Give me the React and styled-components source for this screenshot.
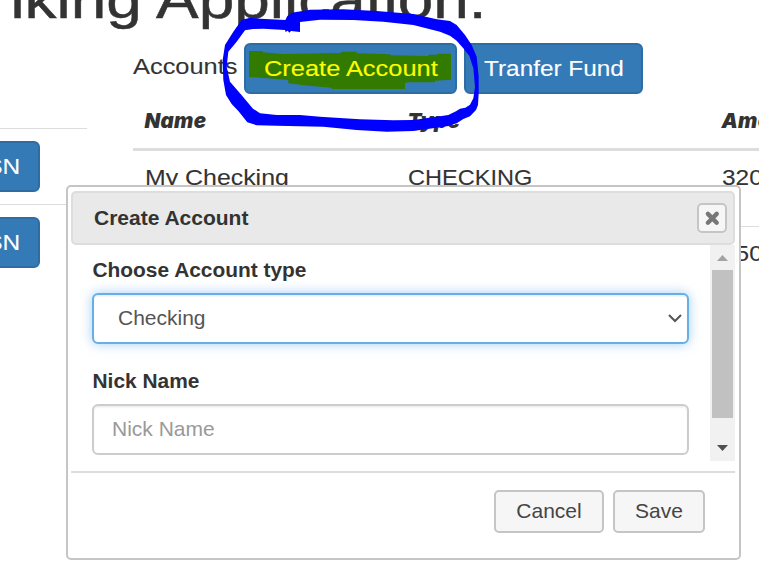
import React from 'react';
import styled, { createGlobalStyle } from 'styled-components';

const GlobalStyle = createGlobalStyle`
  *, *::before, *::after { box-sizing: border-box; }
  body {
    margin: 0;
    background: #fff;
    color: #333;
    font-family: 'Liberation Sans', Arial, sans-serif;
    font-size: 21px;
    line-height: 30px;
    overflow: hidden;
  }
`;

const Page = styled.main`
  position: relative;
  width: 759px;
  height: 574px;
  overflow: hidden;
`;

const Wide = styled.span`
  display: inline-block;
  white-space: nowrap;
  font-size: ${(p) => p.$size || 22}px;
  -webkit-text-stroke: ${(p) => p.$stroke || 0.1}px currentColor;
  transform: translateY(1px) scaleX(${(p) => p.$stretch || 1.11});
  transform-origin: ${(p) => p.$origin || 'left'} center;
`;

const Title = styled.h1`
  margin: -32px 0 0 -11px;
  height: 75px;
  font-size: 54px;
  font-weight: 400;
  line-height: 60px;
`;

const Columns = styled.div`
  display: grid;
  grid-template-columns: 87px 700px;
  column-gap: 46px;
`;

const CustomerList = styled.section`
  padding-top: 85px;
`;

const CustomerRow = styled.div`
  height: 76px;
  padding-top: 12px;
  border-top: 1px solid #ddd;
`;

const PrimaryButton = styled.button`
  position: relative;
  display: flex;
  align-items: center;
  justify-content: ${(p) => p.$align || 'flex-start'};
  width: ${(p) => p.$width}px;
  height: 51px;
  margin: 0 0 0 ${(p) => p.$shift || 0}px;
  padding: 0 18px 2px;
  border: 2px solid #2e6da4;
  border-radius: 6px;
  background: #337ab7;
  color: ${(p) => (p.$marked ? '#ff0' : '#fff')};
  font: inherit;
`;

const Highlight = styled.svg`
  position: absolute;
  left: -2px;
  top: -2px;
  width: 213px;
  height: 51px;
`;

const Toolbar = styled.div`
  display: flex;
  align-items: center;
  gap: 7px;
  height: 51px;
`;

const ToolbarLabel = styled.span`
  width: 104px;
  margin-top: -5px;
`;

const AccountRow = styled.div`
  display: grid;
  grid-template-columns: 263px 314px 1fr;
  height: 76px;
  padding: 11px 0 0 12px;
  border-top: 1px solid #ddd;
`;

const HeadRow = styled(AccountRow)`
  height: 57px;
  padding: 12px 0 0 11.5px;
  border-top: 0;
  border-bottom: 3px solid #ddd;
  font-family: Inter, 'Liberation Sans', sans-serif;
  font-size: 20.5px;
  font-style: italic;
  font-weight: 900;
  letter-spacing: 0.3px;

  & + ${AccountRow} { border-top: 0; height: 75px; }
`;

const Circle = styled.svg`
  position: absolute;
  left: 210px;
  top: 0;
  width: 280px;
  height: 145px;
  pointer-events: none;
`;

const Dialog = styled.section`
  position: absolute;
  left: 66px;
  top: 185px;
  display: flex;
  flex-direction: column;
  width: 675px;
  height: 375px;
  padding: 4px 4px 4px 3px;
  border: 2px solid #c5c5c5;
  border-radius: 5px;
  background: #fff;
`;

const DialogHeader = styled.header`
  display: flex;
  align-items: center;
  justify-content: space-between;
  height: 54px;
  padding: 0 6px 0 21px;
  border: 2px solid #ddd;
  border-radius: 5px;
  background: #e9e9e9;
  font-weight: 700;
`;

const CloseButton = styled.button`
  display: grid;
  place-items: center;
  width: 30px;
  height: 30px;
  padding: 0;
  border: 2px solid #c5c5c5;
  border-radius: 5px;
  background: #f6f6f6;
`;

const DialogBody = styled.div`
  display: grid;
  grid-template-columns: 1fr 25px;
  grid-template-rows: 216px;
  height: 216px;
`;

const Form = styled.div`
  padding: 10px 21px 0 21px;
`;

const Label = styled.label`
  display: block;
  height: 38px;
  padding-left: 0.5px;
  font-weight: 700;
  font-size: 20.9px;
`;

const Field = styled.div`
  display: flex;
  align-items: center;
  justify-content: space-between;
  width: 597px;
  height: 51px;
  margin-bottom: 22px;
  padding: 0 5px 2px ${(p) => (p.$focused ? 24 : 18)}px;
  border: 2px solid ${(p) => (p.$focused ? '#66afe9' : '#ccc')};
  border-radius: 6px;
  background: #fff;
  color: ${(p) => (p.$focused ? '#555' : '#999')};
  box-shadow: inset 0 1.5px 1.5px rgba(0, 0, 0, 0.075)
    ${(p) => (p.$focused ? ', 0 0 12px rgba(102, 175, 233, 0.6)' : '')};
`;

const Scrollbar = styled.div`
  display: flex;
  flex-direction: column;
  align-items: center;
  background: #f1f1f1;
`;

const ScrollArrow = styled.svg`
  width: 25px;
  height: 25px;
`;

const Thumb = styled.div`
  width: 21px;
  height: 148px;
  margin-bottom: 18px;
  background: #c1c1c1;
`;

const DialogFooter = styled.footer`
  display: flex;
  justify-content: flex-end;
  gap: 9px;
  margin-top: 10px;
  padding: 17px 30px 0 0;
  border-top: 2px solid #ddd;
`;

const DialogButton = styled.button`
  width: ${(p) => p.$width}px;
  height: 43px;
  padding: 0 0 1px;
  border: 2px solid #c5c5c5;
  border-radius: 5px;
  background: #f6f6f6;
  color: #454545;
  font: inherit;
`;

const customers = ['SSN', 'SSN'];
const accounts = [
  { name: 'My Checking', type: 'CHECKING', amount: '3200' },
  { name: '', type: '', amount: '1500' },
];

export default function App() {
  return (
    <Page>
      <GlobalStyle />
      <Title><Wide $size={54} $stretch={1.184} $stroke={0.5}>nking Application.</Wide></Title>
      <Columns>
        <CustomerList>
          {customers.map((label, i) => (
            <CustomerRow key={i}>
              <PrimaryButton $width={100} $shift={-60} $align="flex-end">
                <Wide $origin="right">{label}</Wide>
              </PrimaryButton>
            </CustomerRow>
          ))}
        </CustomerList>
        <section>
          <Toolbar>
            <ToolbarLabel><Wide $stretch={1.155}>Accounts</Wide></ToolbarLabel>
            <PrimaryButton $width={213} $marked>
              <Highlight viewBox="102 129 639 153">
                <path fill="#337a00" d="M117 153H158V157L220 162L393 159L395 155H440V160L540 163L543 166L655 168V164H683V161H723V239L675 242V247H593L585 250V267H365V263L282 256L235 250V240L200 237L117 231Z" />
              </Highlight>
              <Wide $stretch={1.155}>Create Account</Wide>
            </PrimaryButton>
            <PrimaryButton $width={179}><Wide $stretch={1.107}>Tranfer Fund</Wide></PrimaryButton>
          </Toolbar>
          <HeadRow>
            <span>Name</span>
            <span>Type</span>
            <span>Amount</span>
          </HeadRow>
          {accounts.map((a) => (
            <AccountRow key={a.amount}>
              <Wide $stretch={1.131}>{a.name}</Wide>
              <Wide $stretch={1.07}>{a.type}</Wide>
              <Wide>{a.amount}</Wide>
            </AccountRow>
          ))}
        </section>
      </Columns>

      <Circle viewBox="0 0 840 435">
        <path
          fill="#00f"
          fillRule="evenodd"
          d="M95 60L120 53L150 56L226 60L232 48L245 38L300 29L400 28L500 33L610 42L680 58L720 63L740 75L765 105L785 135L800 170L806 230V280L804 315L798 330L780 349L760 357L740 370L715 378L690 382L610 393L530 395L440 390L340 380L200 377L140 376L112 367L85 333L65 312L48 285L40 240L38 180L45 135L70 95Z
          M270 96V66L330 59L430 60L520 65L610 75L690 95L720 107L740 122L760 145L778 168L790 205L795 260L790 295L780 314L766 323L750 326L738 334L715 345L690 349L610 360L550 361L450 358L330 350L270 345L200 345L150 340L129 326L95 286L60 245L50 200L55 155L80 125L105 91L129 87L160 86L225 90L227 96L233 92L238 98L243 93Z"
        />
      </Circle>

      <Dialog>
        <DialogHeader>
          <span>Create Account</span>
          <CloseButton aria-label="Close">
            <svg width="16" height="16" viewBox="0 0 16 16">
              <path d="M3.9 3.9L12.7 12.7M12.7 3.9L3.9 12.7" stroke="#777" strokeWidth="4.4" strokeLinecap="round" />
            </svg>
          </CloseButton>
        </DialogHeader>
        <DialogBody>
          <Form>
            <Label>Choose Account type</Label>
            <Field $focused>
              <span>Checking</span>
              <svg width="14" height="10" viewBox="0 0 14 10">
                <path d="M1 2L7 8L13 2" fill="none" stroke="#555" strokeWidth="2" />
              </svg>
            </Field>
            <Label>Nick Name</Label>
            <Field><span>Nick Name</span></Field>
          </Form>
          <Scrollbar>
            <ScrollArrow viewBox="0 0 25 25"><path d="M7 16L12.5 10L18 16Z" fill="#a3a3a3" /></ScrollArrow>
            <Thumb />
            <ScrollArrow viewBox="0 0 25 25"><path d="M7 9L12.5 15L18 9Z" fill="#505050" /></ScrollArrow>
          </Scrollbar>
        </DialogBody>
        <DialogFooter>
          <DialogButton $width={110}>Cancel</DialogButton>
          <DialogButton $width={92}>Save</DialogButton>
        </DialogFooter>
      </Dialog>
    </Page>
  );
}
